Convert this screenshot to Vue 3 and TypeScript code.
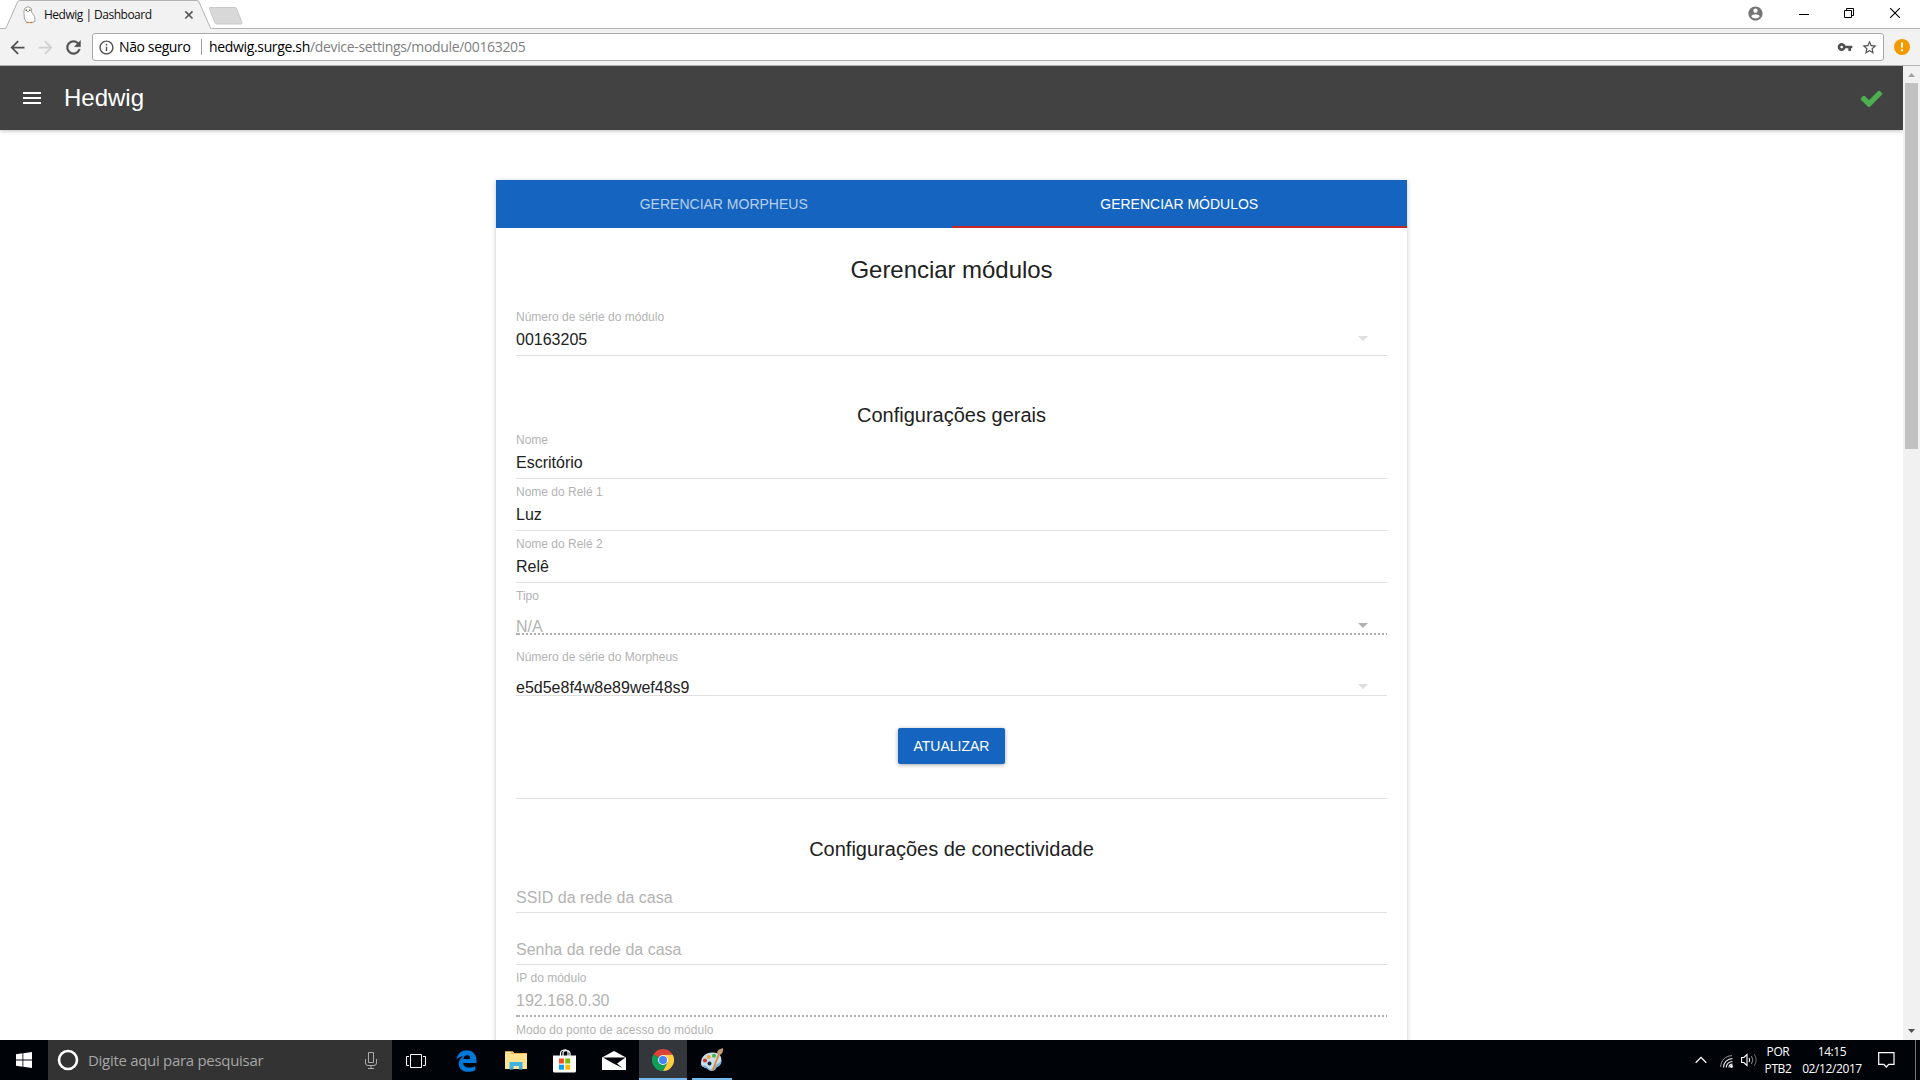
<script setup lang="ts">
import { ref } from 'vue'

interface Field {
  label?: string
  value: string
  muted?: boolean
  dotted?: boolean
  select?: boolean
  kind?: 'tight' | 'empty'
}

const tabs = ['Gerenciar Morpheus', 'Gerenciar módulos']
const activeTab = ref(1)

const serial: Field = { label: 'Número de série do módulo', value: '00163205', select: true }

const general: Field[] = [
  { label: 'Nome', value: 'Escritório' },
  { label: 'Nome do Relé 1', value: 'Luz' },
  { label: 'Nome do Relé 2', value: 'Relê' },
  { label: 'Tipo', value: 'N/A', muted: true, dotted: true, select: true, kind: 'tight' },
  { label: 'Número de série do Morpheus', value: 'e5d5e8f4w8e89wef48s9', select: true, kind: 'tight' },
]

const network: Field[] = [
  { value: 'SSID da rede da casa', muted: true, kind: 'empty' },
  { value: 'Senha da rede da casa', muted: true, kind: 'empty' },
  { label: 'IP do módulo', value: '192.168.0.30', muted: true, dotted: true },
]

const classes = (f: Field) => [f.kind, { muted: f.muted, dotted: f.dotted }]
</script>

<template>
  <div class="screen">
    <header class="titlebar">
      <div class="tab">
        <svg class="tab-shape" width="214" height="30" viewBox="0 0 214 30">
          <path d="M4 29.5V28.5H6L18 1.5Q18.500 .5 20 .5H197Q198.500 .5 199 1.500L210.500 28.500H214V29.500Z" fill="#f2f2f2" />
          <path d="M0 28.500H4.500Q6 28.500 6.500 27L17.500 2Q18 .5 20 .5H197Q198.500 .5 199 2L210 27Q210.500 28.500 212 28.500H214" fill="none" stroke="#b3b3b3" />
        </svg>
        <svg class="favicon" width="16" height="18" viewBox="0 0 16 18">
          <path d="M4 2Q7-.5 10 2Q11 4 10.500 6Q15 10 14 15.500L11 16.500H6Q2.500 14 3 8Q2.500 4 4 2Z" fill="#fff" stroke="#9a9a9a" stroke-width=".9" />
          <path d="M4.500 3.500h1.600v1.600H4.500zM8 3.500h1.600v1.600H8z" fill="#6a6a40" />
          <path d="M6.300 5h1.400l-.7 1.500z" fill="#444" />
          <path d="M5.500 16.500h2M9 16.500h2.200" stroke="#b98a42" stroke-width="1.500" />
        </svg>
        <span class="tab-title">Hedwig | Dashboard</span>
        <svg class="tab-close" width="10" height="10" viewBox="0 0 10 10"><path d="M1.300 1.300 8.500 8.500M8.500 1.300 1.300 8.500" stroke="#5a5a5a" stroke-width="1.700" /></svg>
      </div>
      <svg class="new-tab" width="36" height="20" viewBox="0 0 36 20"><path d="M2 1.500h25q1 0 1.500 1l5.500 14q.2 1.500-1 1.500H9q-1.500 0-2-1L1.500 3Q1 1.500 2 1.500Z" fill="#d8d8d8" stroke="#c9c9c9" /></svg>
      <div class="window-buttons">
        <svg width="17" height="17" viewBox="0 0 24 24"><path fill="#757575" d="M12 2C6.480 2 2 6.480 2 12s4.480 10 10 10 10-4.480 10-10S17.520 2 12 2zm0 3c1.660 0 3 1.340 3 3s-1.340 3-3 3-3-1.340-3-3 1.340-3 3-3zm0 14.200c-2.500 0-4.710-1.280-6-3.220.03-1.990 4-3.080 6-3.080 1.990 0 5.970 1.090 6 3.080-1.290 1.940-3.500 3.220-6 3.220z" /></svg>
        <svg class="minimise" width="10" height="10" viewBox="0 0 10 10"><path d="M0 5.500h10" stroke="#000" /></svg>
        <svg class="restore" width="10" height="10" viewBox="0 0 10 10"><path d="M.5 2.500h7v7h-7zM2.500 2.500v-2h7v7h-2" fill="none" stroke="#000" /></svg>
        <svg class="close" width="10" height="10" viewBox="0 0 10 10"><path d="M0 0 10 10M10 0 0 10" stroke="#000" stroke-width="1.100" /></svg>
      </div>
    </header>

    <div class="toolbar">
      <svg class="nav" width="21" height="21" viewBox="0 0 24 24"><path fill="#505050" d="M20 11H7.830l5.590-5.590L12 4l-8 8 8 8 1.410-1.410L7.830 13H20v-2z" /></svg>
      <svg class="nav" width="21" height="21" viewBox="0 0 24 24"><path fill="#cfcfcf" d="m12 4-1.410 1.410L16.170 11H4v2h12.170l-5.580 5.590L12 20l8-8z" /></svg>
      <svg class="nav" width="21" height="21" viewBox="0 0 24 24"><path fill="#505050" stroke="#505050" stroke-width=".5" d="M17.650 6.350C16.200 4.900 14.210 4 12 4c-4.420 0-7.990 3.580-7.990 8s3.570 8 7.990 8c3.730 0 6.840-2.550 7.730-6h-2.080c-.82 2.330-3.040 4-5.650 4-3.310 0-6-2.690-6-6s2.690-6 6-6c1.660 0 3.140.69 4.220 1.780L13 11h7V4l-2.350 2.350z" /></svg>
      <div class="omnibox">
        <svg width="17" height="17" viewBox="0 0 24 24"><path fill="#505050" d="M11 17h2v-6h-2v6zm1-15C6.480 2 2 6.480 2 12s4.480 10 10 10 10-4.480 10-10S17.520 2 12 2zm0 18c-4.410 0-8-3.590-8-8s3.590-8 8-8 8 3.590 8 8-3.590 8-8 8zM11 9h2V7h-2v2z" /></svg>
        <span class="security">Não seguro</span>
        <span class="separator"></span>
        <span class="url">hedwig.surge.sh<span class="path">/device-settings/module/00163205</span></span>
        <svg class="key" width="16" height="16" viewBox="0 0 24 24"><path fill="#505050" d="M12.650 10C11.830 7.670 9.610 6 7 6c-3.310 0-6 2.690-6 6s2.690 6 6 6c2.610 0 4.830-1.670 5.650-4H17v4h4v-4h2v-4H12.650zM7 14c-1.100 0-2-.9-2-2s.9-2 2-2 2 .9 2 2-.9 2-2 2z" /></svg>
        <svg class="star" width="17" height="17" viewBox="0 0 24 24"><path fill="#505050" d="m22 9.240-7.190-.62L12 2 9.190 8.630 2 9.240l5.460 4.730L5.820 21 12 17.270 18.180 21l-1.630-7.030L22 9.240zM12 15.400l-3.760 2.270 1-4.280-3.320-2.880 4.380-.38L12 6.100l1.710 4.040 4.380.38-3.320 2.880 1 4.280L12 15.400z" /></svg>
      </div>
      <svg class="alert" width="16" height="16" viewBox="0 0 16 16"><circle cx="8" cy="8" r="8" fill="#f29900" /><path d="M7 3.500h2v5H7zM7 10.300h2v2H7z" fill="#fff" /></svg>
    </div>

    <div class="viewport">
      <div class="page">
        <nav class="appbar">
          <svg width="18" height="12" viewBox="0 0 18 12"><path d="M0 0h18v2H0zM0 5h18v2H0zM0 10h18v2H0z" fill="#fff" /></svg>
          <span class="brand">Hedwig</span>
          <svg class="status" width="25" height="25" viewBox="0 0 1792 1792"><path fill="#4caf50" d="M1671 566q0 40-28 68l-724 724-136 136q-28 28-68 28t-68-28l-136-136-362-362q-28-28-28-68t28-68l136-136q28-28 68-28t68 28l294 295 656-657q28-28 68-28t68 28l136 136q28 28 28 68z" /></svg>
        </nav>

        <main class="card">
          <div class="tabs">
            <button v-for="(t, i) in tabs" :key="t" :class="{ active: i === activeTab }" @click="activeTab = i">{{ t }}</button>
          </div>
          <div class="body">
            <h1>Gerenciar módulos</h1>
            <div class="field">
              <label>{{ serial.label }}</label>
              <div class="value">{{ serial.value }}<i class="caret"></i></div>
            </div>

            <h2 class="general">Configurações gerais</h2>
            <div v-for="f in general" :key="f.label" class="field" :class="classes(f)">
              <label>{{ f.label }}</label>
              <div class="value">{{ f.value }}<i v-if="f.select" class="caret"></i></div>
            </div>

            <button class="submit">Atualizar</button>
            <hr />

            <h2 class="network">Configurações de conectividade</h2>
            <div v-for="f in network" :key="f.value" class="field" :class="classes(f)">
              <label v-if="f.label">{{ f.label }}</label>
              <div class="value">{{ f.value }}</div>
            </div>
            <div class="field"><label>Modo do ponto de acesso do módulo</label></div>
          </div>
        </main>
      </div>
      <div class="scrollbar">
        <svg width="17" height="17" viewBox="0 0 17 17"><path d="M5 11 8.500 7 12 11Z" fill="#a3a3a3" /></svg>
        <div class="thumb"></div>
        <svg class="down" width="17" height="17" viewBox="0 0 17 17"><path d="M5 6 8.500 10 12 6Z" fill="#505050" /></svg>
      </div>
    </div>

    <footer class="taskbar">
      <div class="start">
        <svg width="16" height="16" viewBox="0 0 16 16"><path d="M0 2.200 6.500 1.300V7.600H0zM7.300 1.200 16 0V7.600H7.300zM0 8.400H6.500V14.700L0 13.800zM7.300 8.400H16V16L7.300 14.800z" fill="#fff" /></svg>
      </div>
      <div class="search">
        <svg width="22" height="22" viewBox="0 0 22 22"><circle cx="11" cy="11" r="9" fill="none" stroke="#fff" stroke-width="2.600" /></svg>
        <span>Digite aqui para pesquisar</span>
        <svg class="mic" width="12" height="17" viewBox="0 0 12 17"><path d="M3.500.5h5v10h-5zM.5 7v4q0 2.500 2.500 2.500h6q2.500 0 2.500-2.500V7M6 13.500v3M3 16.500h6" fill="none" stroke="#aaa" /></svg>
      </div>
      <div class="app">
        <svg width="20" height="14" viewBox="0 0 20 14"><path d="M4.500.5h11v13h-11zM3 2.500H.5v9H3M17 2.500h2.500v9H17" fill="none" stroke="#fff" /></svg>
      </div>
      <div class="app edge">
        <svg width="21" height="22" viewBox="0 0 21 22"><path d="M.5 9.700C1.300 4 5.300.3 10.700.3 17 .3 20.500 4.800 20.500 10.300V13H7.200C7.400 16.200 10 17.600 13 17.600c2.400 0 4.400-.6 6.300-1.700v4.400c-2 1-4.500 1.500-7.200 1.500C6.400 21.800 2.700 18.600 2.700 13.700c0-3.300 2-6 4.800-7.500C4.700 6.400 2.200 7.500.5 9.700ZM7.300 9h7c0-2.400-1-3.800-3.200-3.800C9 5.200 7.700 6.700 7.300 9Z" fill="#0078d7" /></svg>
      </div>
      <div class="app">
        <svg width="22" height="19" viewBox="0 0 22 19"><path d="M0 .5h8l1 1.500h13V18H0z" fill="#ffe291" /><path d="M0 .5h8l1 1.500H22V3H0z" fill="#f4bf48" /><path d="M1 1h5v1.500H1z" fill="#fff3c4" /><path d="M4.500 11h13v7.500H14V15H8.500v3.500h-4z" fill="#3fb2e3" /></svg>
      </div>
      <div class="app">
        <svg width="23" height="24" viewBox="0 0 23 24"><path d="M7.500 7V4.500q0-3 3.500-3.500t4 2V7M10 7V3.500q1-2 3.500-2 3.500.3 3.500 3V7" fill="none" stroke="#fff" stroke-width="1.200" /><path d="M0 6.500h23V22q0 1.500-1.500 1.500h-20Q0 23.500 0 22Z" fill="#fff" /><path d="M6 9.500h5v5H6z" fill="#f25022" /><path d="M12.200 9.500h5v5h-5z" fill="#7fba00" /><path d="M6 15.700h5v5H6z" fill="#00a4ef" /><path d="M12.200 15.700h5v5h-5z" fill="#ffb900" /></svg>
      </div>
      <div class="app">
        <svg width="24" height="19" viewBox="0 0 24 19"><path d="M0 6.500 12 0 24 6.500V19H0Z" fill="#fff" /><path d="M1 6.500H23.500L15 12.500 20.500 17 10 11.700Z" fill="#000308" /></svg>
      </div>
      <div class="app active">
        <svg width="22" height="22" viewBox="0 0 22 22"><path d="M11 11 1.470 5.500A11 11 0 0 1 20.530 5.500Z" fill="#db4437" /><path d="M1.470 5.500A11 11 0 0 0 11 22L15.300 13.500 11 11Z" fill="#0f9d58" /><path d="M11 22A11 11 0 0 0 20.530 5.500L11 6V11L15.500 13.500Z" fill="#ffcd40" /><path d="M11 6H20.750L20.530 5.500H11Z" fill="#db4437" /><circle cx="11" cy="11" r="5" fill="#f1f1f1" /><circle cx="11" cy="11" r="4" fill="#4285f4" /></svg>
      </div>
      <div class="app running">
        <svg width="24" height="24" viewBox="0 0 24 24"><path d="M1 15C1 8 7 4 13 4.500c6 .3 9.500 4 8 9-1 4-3 2.500-5 4-1.500 1.500-1 4.500-5 4.800C8 22.500 8 18.500 5 19c-3 .3-4-1.500-4-4Z" fill="#c3dff0" /><path d="M3 17q3 0 5 3 3 3 6-.5 1-3 4-4 3-1 3.500-4 .5 5-3 7-3 1-3 3-3 2.500-6 1-3-3-5.500-2.800Z" fill="#7fb2d4" /><circle cx="5" cy="12.500" r="2.100" fill="#d83b2c" /><circle cx="8.700" cy="9" r="2" fill="#f0a62c" /><circle cx="14" cy="7.700" r="2" fill="#4db13f" /><circle cx="9.500" cy="15.500" r="2" fill="#1b2b3b" /><path d="M12.500 22.500 19 6" stroke="#e08a35" stroke-width="1.900" /><path d="M17 5.500q0-3 2-4l4-1.500q.5 2-.5 4.500-1 2.500-4 2.500Z" fill="#c79a6b" /></svg>
      </div>

      <div class="tray">
        <svg width="12" height="8" viewBox="0 0 12 8"><path d="M.7 6.700 6 1.400 11.300 6.700" fill="none" stroke="#fff" stroke-width="1.300" /></svg>
        <svg class="wifi" width="13" height="13" viewBox="0 0 13 13"><g fill="none" stroke="#e8e8e8"><path d="M.7 12C.7 5.500 5.500.7 12 .7" stroke="#999" /><path d="M3.500 12.500C3.500 7.500 7.500 3.600 12.500 3.600M6.300 12.500c0-3.500 2.700-6 6.200-6M9 12.500q0-3.300 3.500-3.300" stroke-width="1.200" /></g><circle cx="11.500" cy="11.500" r="1.400" fill="#fff" /></svg>
        <svg class="volume" width="17" height="14" viewBox="0 0 17 14"><path d="M.6 4.500h2.200L6 1.500v11L2.800 9.500H.6zM8 5q1.400 2 0 4" fill="none" stroke="#fff" stroke-width="1.100" /><path d="M10.500 3q2.600 4 0 8" fill="none" stroke="#8b8b8b" /><path d="M13.200 1q4 6 0 12" fill="none" stroke="#666" /></svg>
        <div class="stack lang"><span>POR</span><span>PTB2</span></div>
        <div class="stack clock"><span>14:15</span><span>02/12/2017</span></div>
        <svg class="notify" width="17" height="17" viewBox="0 0 17 17"><path d="M.7.7h15.300v11.600H10.800L8.300 15 5.800 12.300H.7Z" fill="none" stroke="#fff" stroke-width="1.200" /></svg>
        <span class="peek"></span>
      </div>
    </footer>
  </div>
</template>

<style>
body {
  margin: 0;
  overflow: hidden;
}
</style>

<style scoped>
* {
  box-sizing: border-box;
}
svg {
  display: block;
  flex: none;
}
button {
  font: inherit;
  border: 0;
  padding: 0;
}
.screen {
  width: 1920px;
  height: 1080px;
  display: flex;
  flex-direction: column;
  overflow: hidden;
  background: #fff;
  font-family: "Liberation Sans", Arial, sans-serif;
  white-space: nowrap;
}

/* browser chrome */
.titlebar,
.toolbar,
.taskbar {
  font-family: "Open Sans", "Noto Sans", sans-serif;
}
.titlebar {
  flex: none;
  height: 29px;
  display: flex;
  border-bottom: 1px solid #b3b3b3;
}
.tab {
  position: relative;
  width: 208px;
  height: 28px;
  padding-left: 21px;
  display: flex;
  align-items: center;
}
.tab-shape {
  position: absolute;
  left: 0;
  top: 0;
}
.favicon,
.tab-title,
.tab-close {
  position: relative;
}
.favicon {
  margin-top: 2px;
}
.tab-title {
  width: 140px;
  margin: 1px 0 0 7px;
  font-size: 12px;
  letter-spacing: -0.5px;
  color: #111;
}
.tab-close {
  margin-top: 2px;
}
.new-tab {
  margin-top: 6px;
}
.window-buttons {
  height: 26px;
  margin-left: auto;
  padding-right: 20px;
  display: flex;
  align-items: center;
}
.minimise {
  margin: 1px 0 0 35.500px;
}
.restore {
  margin-left: 35px;
}
.close {
  margin-left: 36px;
}
.toolbar {
  flex: none;
  height: 37px;
  padding: 0 10px 0 7px;
  display: flex;
  align-items: center;
  background: #f2f2f2;
  border-bottom: 1px solid #b3b3b3;
}
.nav {
  margin-right: 7px;
}
.omnibox {
  width: 1792px;
  height: 28px;
  margin-left: 1px;
  padding: 0 5px 0 4.500px;
  display: flex;
  align-items: center;
  border: 1px solid #a9a9a9;
  border-radius: 3px;
  background: #fff;
  font-size: 14px;
  line-height: 20px;
}
.security {
  width: 82px;
  margin-left: 4.500px;
  letter-spacing: -0.38px;
}
.separator {
  width: 1px;
  height: 16px;
  margin-right: 7px;
  background: #a0a0a0;
}
.url {
  letter-spacing: -0.34px;
}
.path {
  color: #808080;
}
.key {
  margin: 0 8px 0 auto;
}
.alert {
  margin-left: auto;
}

/* page */
.viewport {
  flex: none;
  height: 974px;
  display: flex;
}
.page {
  width: 1903px;
  display: flex;
  flex-direction: column;
  overflow: hidden;
}
.appbar {
  flex: none;
  height: 64px;
  padding: 0 19.500px 0 23px;
  display: flex;
  align-items: center;
  background: #424242;
  box-shadow: 0 1px 4px rgba(0, 0, 0, 0.26);
}
.brand {
  margin-left: 23px;
  font-size: 24px;
  line-height: 28px;
  color: #fff;
}
.status {
  margin-left: auto;
}
.card {
  flex: none;
  width: 911px;
  height: 1100px;
  margin: 50px 0 0 496px;
  box-shadow: 0 1px 5px rgba(0, 0, 0, 0.22);
}
.tabs {
  height: 48px;
  display: flex;
  background: #1565c0;
}
.tabs button {
  flex: 1;
  background: none;
  border-top: 2px solid transparent;
  border-bottom: 2px solid transparent;
  font-size: 14px;
  line-height: 16px;
  text-transform: uppercase;
  color: rgba(255, 255, 255, 0.7);
}
.tabs .active {
  color: #fff;
  border-bottom-color: #c62828;
}
.body {
  padding: 28px 20px 0;
  display: flex;
  flex-direction: column;
  color: #212121;
}
h1,
h2 {
  margin: 0;
  font-weight: 400;
  text-align: center;
}
h1 {
  margin-bottom: 20px;
  font-size: 24px;
  line-height: 28px;
  letter-spacing: -0.04px;
}
h2 {
  font-size: 20px;
  line-height: 22px;
}
.general {
  margin: 48px 0 7px;
}
.network {
  margin: 39px 0 27px;
}
.field {
  margin-top: 6px;
}
.field label {
  display: block;
  height: 14px;
  margin-bottom: 5px;
  font-size: 12px;
  line-height: 14px;
  color: #b3b3b3;
}
.value {
  height: 27px;
  padding-top: 1px;
  display: flex;
  align-items: flex-start;
  justify-content: space-between;
  border-bottom: 1px solid #e0e0e0;
  font-size: 16px;
  line-height: 20px;
}
.caret {
  margin: 6px 19px 0 0;
  border: 5px solid transparent;
  border-top-color: #dedede;
  border-bottom: 0;
}
.muted .value {
  color: #b3b3b3;
}
.dotted .value {
  border: 0;
  background:
    linear-gradient(#b0b0b0, #b0b0b0) 0 100% / 2px 2px no-repeat,
    repeating-linear-gradient(90deg, transparent 0 2px, #b0b0b0 2px 4px) 0 100% / 100% 2px no-repeat;
}
.tight .value {
  height: 17px;
  margin-top: 15px;
  line-height: 16px;
}
.tight .caret {
  margin-top: 4px;
}
.tight + .tight {
  margin-top: 15px;
}
.tight.dotted .caret {
  border-top-color: #b0b0b0;
}
.general + .field,
.network + .field {
  margin-top: 0;
}
.empty .value {
  height: 26px;
}
.empty + .empty {
  margin-top: 26px;
}
.submit {
  align-self: center;
  width: 107px;
  height: 36px;
  margin: 32px 0 34px;
  border-radius: 2px;
  background: #1565c0;
  box-shadow: 0 1px 4px rgba(0, 0, 0, 0.35);
  font-size: 14px;
  text-transform: uppercase;
  color: #fff;
}
hr {
  width: 100%;
  height: 1px;
  margin: 0;
  border: 0;
  background: #e0e0e0;
}
.scrollbar {
  width: 17px;
  display: flex;
  flex-direction: column;
  background: #f1f1f1;
}
.thumb {
  width: 13px;
  height: 366px;
  margin-left: 2px;
  background: #c1c1c1;
}
.down {
  margin-top: auto;
}

/* taskbar */
.taskbar {
  flex: none;
  height: 40px;
  display: flex;
  align-items: stretch;
  background: #000308;
  color: #fff;
}
.start,
.app {
  width: 48px;
  display: flex;
  align-items: center;
  justify-content: center;
}
.search {
  width: 344px;
  margin-right: -1px;
  padding: 0 15px 0 9px;
  display: flex;
  align-items: center;
  background: #333;
  font-size: 15px;
  letter-spacing: -0.3px;
  color: #a6a6a6;
}
.search span {
  margin-left: 9px;
}
.mic {
  margin-left: auto;
}
.app {
  width: 49px;
  padding-top: 1px;
}
.app.edge {
  margin-left: 2px;
}
.app.active {
  width: 48px;
  margin-left: 1px;
  background: #33363a;
  border-bottom: 2px solid #76b9ed;
}
.app.running {
  width: 40px;
  margin-left: 5px;
  border-bottom: 2px solid #76b9ed;
}
.tray {
  margin-left: auto;
  padding-right: 4px;
  display: flex;
  align-items: center;
}
.wifi {
  margin: 3px 0 0 13px;
}
.volume {
  margin-left: 8px;
}
.stack {
  display: flex;
  flex-direction: column;
  align-items: center;
  font-size: 12px;
  line-height: 17px;
  letter-spacing: -0.4px;
}
.lang {
  width: 30px;
  margin-left: 5px;
}
.clock {
  width: 60px;
  margin-left: 9px;
}
.notify {
  margin: 0 20px 0 16px;
}
.peek {
  width: 1px;
  height: 40px;
  background: #777;
}
</style>
